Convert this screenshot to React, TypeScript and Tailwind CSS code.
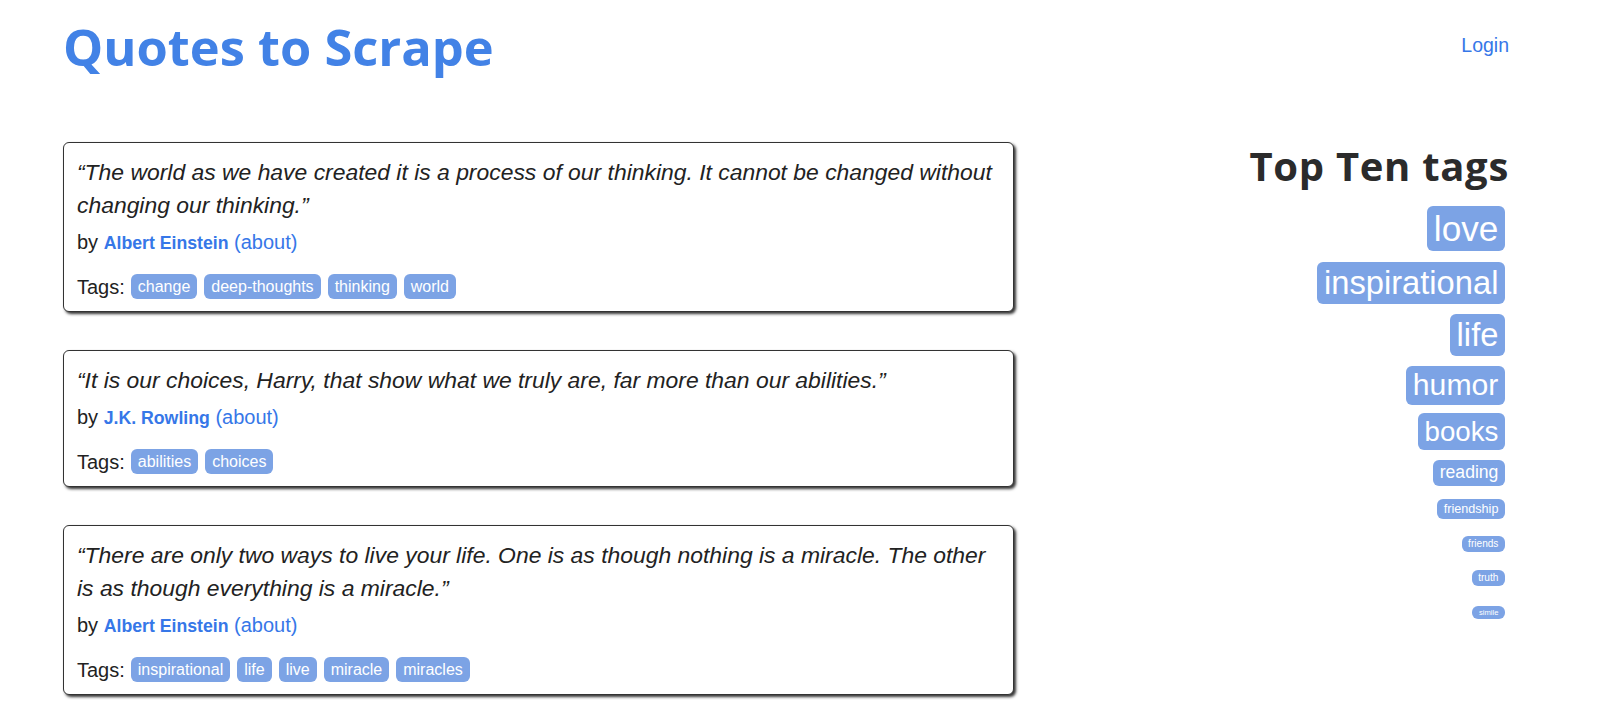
import React from "react";

type Quote = { text: string; author: string; tags: string[] };

const quotes: Quote[] = [
  {
    text: "“The world as we have created it is a process of our thinking. It cannot be changed without changing our thinking.”",
    author: "Albert Einstein",
    tags: ["change", "deep-thoughts", "thinking", "world"],
  },
  {
    text: "“It is our choices, Harry, that show what we truly are, far more than our abilities.”",
    author: "J.K. Rowling",
    tags: ["abilities", "choices"],
  },
  {
    text: "“There are only two ways to live your life. One is as though nothing is a miracle. The other is as though everything is a miracle.”",
    author: "Albert Einstein",
    tags: ["inspirational", "life", "live", "miracle", "miracles"],
  },
];

function QuoteCard({ q }: { q: Quote }) {
  return (
    <div className="w-[951px] rounded-[6px] border border-[#333] bg-white px-[13px] pt-[13px] pb-[11px] shadow-[2px_2px_3px_#333]">
      <div className="mb-[7px] text-[22.9px] leading-[33px] italic text-[#222]">{q.text}</div>
      <div className="text-[20px] leading-[27px] text-[#222]">
        by{" "}
        <span className="text-[17.7px] font-bold text-[#3677e8]">{q.author}</span>{" "}
        <a className="text-[#3677e8]">(about)</a>
      </div>
      <div className="mt-[16px] flex h-[27px] items-center gap-x-[7px] text-[20px] text-[#222]">
        <span className="mr-[-1px]">Tags:</span>
        {q.tags.map((t) => (
          <span
            key={t}
            className="inline-flex h-[25px] items-center rounded-[6px] bg-[#7ca3e5] px-[7px] text-[16px] text-white"
          >
            {t}
          </span>
        ))}
      </div>
    </div>
  );
}

const topTags: { name: string; size: number; h: number; mt: number }[] = [
  { name: "love", size: 35.2, h: 45, mt: 0 },
  { name: "inspirational", size: 32.7, h: 42, mt: 11 },
  { name: "life", size: 32.7, h: 42, mt: 10 },
  { name: "humor", size: 30.2, h: 39, mt: 10 },
  { name: "books", size: 27.7, h: 37, mt: 8 },
  { name: "reading", size: 17.6, h: 26, mt: 10 },
  { name: "friendship", size: 12.6, h: 20, mt: 13 },
  { name: "friends", size: 10.1, h: 16, mt: 17 },
  { name: "truth", size: 10.1, h: 16, mt: 18 },
  { name: "simile", size: 7.6, h: 13, mt: 20 },
];

export default function App() {
  return (
    <div className="min-h-screen bg-white font-['Liberation_Sans',Arial,sans-serif]">
      <div className="pl-[63px] pr-[92px]">
        <header className="flex items-start justify-between pt-[17px]">
          <h1 className="font-['Open_Sans',sans-serif] text-[50.6px] leading-[60px] font-bold text-[#4282e6]">
            Quotes to Scrape
          </h1>
          <a className="mt-[16px] text-[19.5px] leading-[24px] text-[#3677e8]">Login</a>
        </header>
        <div className="mt-[65px] flex justify-between">
          <div className="flex flex-col gap-[38px]">
            {quotes.map((q, i) => (
              <QuoteCard key={i} q={q} />
            ))}
          </div>
          <aside className="flex flex-col items-end">
            <h2 className="font-['Open_Sans',sans-serif] text-[40px] leading-[48px] font-bold tracking-[0.7px] text-[#2b2b2b]">
              Top Ten tags
            </h2>
            <div className="mt-[16px] mr-[4px] flex flex-col items-end">
              {topTags.map((t) => (
                <span
                  key={t.name}
                  className="inline-flex items-center rounded-[6px] bg-[#7ca3e5] px-[6.6px] leading-none text-white"
                  style={{ fontSize: `${t.size}px`, height: `${t.h}px`, marginTop: `${t.mt}px` }}
                >
                  {t.name}
                </span>
              ))}
            </div>
          </aside>
        </div>
      </div>
    </div>
  );
}
